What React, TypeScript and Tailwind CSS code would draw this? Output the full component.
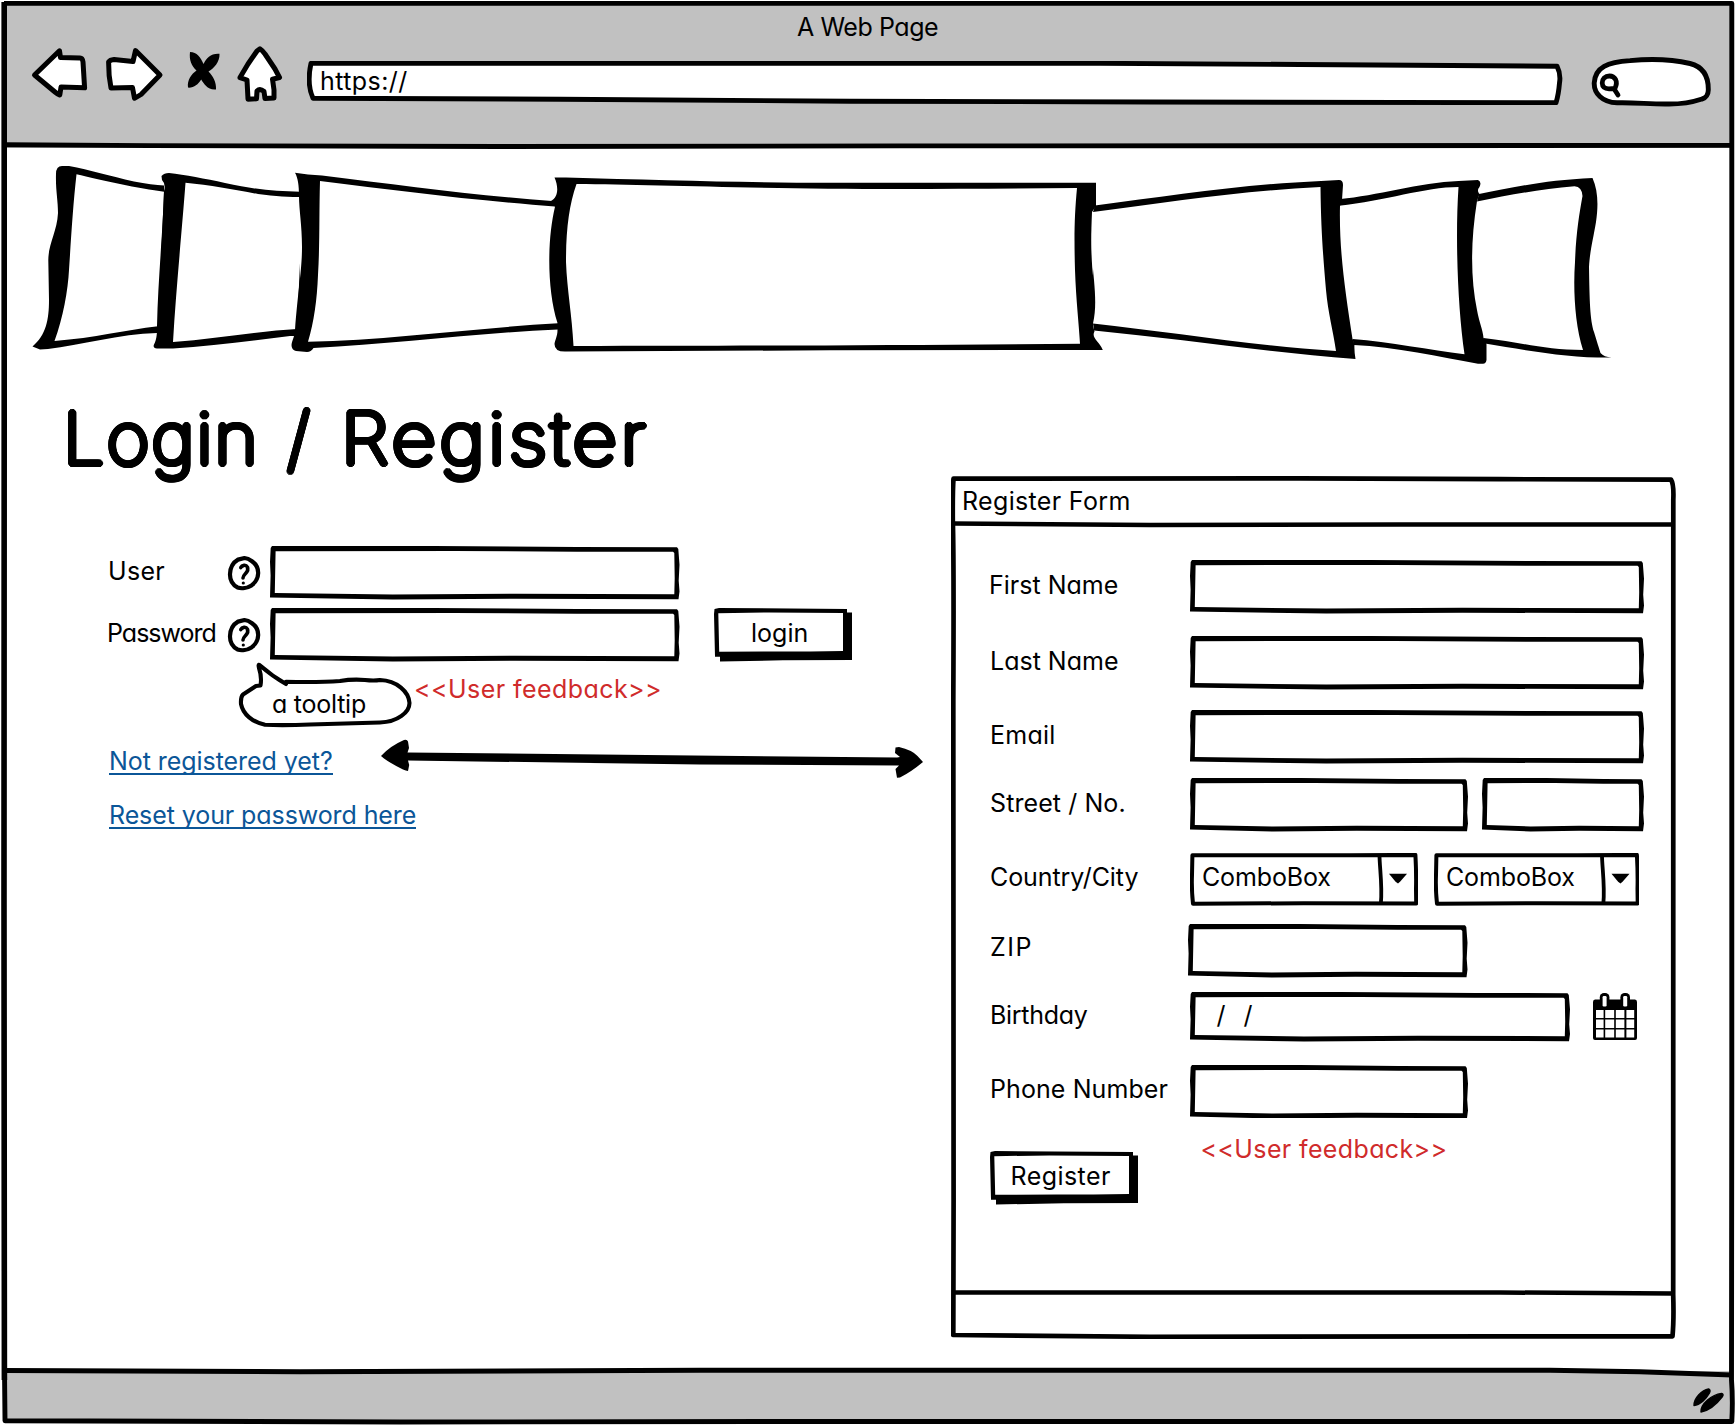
import { useLayoutEffect, useRef, type ReactNode } from "react";

/** Single line of text whose letter spacing is tuned so it spans `width` pixels. */
function Line({ children, width, className = "" }: { children: string; width: number; className?: string }) {
  const ref = useRef<HTMLSpanElement>(null);
  useLayoutEffect(() => {
    const el = ref.current;
    if (!el || children.length < 2) return;
    el.style.letterSpacing = "0px";
    const natural = el.offsetWidth;
    el.style.letterSpacing = `${(width - natural) / (children.length - 1)}px`;
  }, [children, width]);
  return (
    <span className="block shrink-0" style={{ width }}>
      <span ref={ref} className={`inline-block whitespace-pre ${className}`}>
        {children}
      </span>
    </span>
  );
}

/** Hand-drawn rectangle outline sized to its box. */
function Outline({ w, h }: { w: number; h: number }) {
  const outer = `M2 0 L${w * 0.4} 0 L${w * 0.75} 1 L${w - 2.5} 1.2 L${w - 1.2} 3 L${w} ${h * 0.35} L${w - 0.8} ${h * 0.65} L${w} ${h * 0.85} L${w - 1} ${h - 0.3} L${w * 0.6} ${h - 0.8} L${w * 0.3} ${h} L0 ${h - 2} L0.6 ${h * 0.55} L0 ${h * 0.3} L0.7 2 Z`;
  const inner = `M5.6 5.2 L4.8 ${h - 6.4} L${w * 0.3} ${h - 5} L${w * 0.6} ${h - 5.7} L${w - 5.2} ${h - 5.3} L${w - 4.8} ${h * 0.6} L${w - 5.2} 7 L${w - 6.5} 5.8 L${w * 0.75} 5.8 L${w * 0.45} 4.9 Z`;
  return (
    <svg className="absolute inset-0" width={w} height={h} viewBox={`0 0 ${w} ${h}`}>
      <path d={`${outer} ${inner}`} fillRule="evenodd" />
    </svg>
  );
}

function Box({ w, h = 53.5, children }: { w: number; h?: number; children?: ReactNode }) {
  return (
    <div className="relative shrink-0" style={{ width: w, height: h }}>
      <Outline w={w} h={h} />
      {children}
    </div>
  );
}

function SketchButton({ w, label, textWidth, pad }: { w: number; label: string; textWidth: number; pad: number }) {
  return (
    <button className="relative block h-[54px] shrink-0 text-left" style={{ width: w, paddingLeft: pad }}>
      <svg className="absolute inset-0" width={w} height={54} viewBox={`0 0 ${w} 54`}>
        <path
          fillRule="evenodd"
          d={`M0.5 1 L5 0 L${w - 5} 1 V4.5 H${w} V52 L${w * 0.5} 52.3 L6 53.5 V48.7 H1 L0 6 Z M4.3 5.2 L5.2 43.8 L${w * 0.45} 43.4 L${w * 0.7} 43.6 L${w - 9} 43 V5 L${w * 0.4} 4.4 Z`}
        />
      </svg>
      <span className="relative -mt-[4px] block">
        <Line width={textWidth}>{label}</Line>
      </span>
    </button>
  );
}

function Help() {
  return (
    <svg className="mt-[9px] block" width="36" height="37" viewBox="226 555 36 37" fill="none" stroke="#000" strokeLinecap="round" strokeLinejoin="round">
      <path strokeWidth="4.2" d="M238 559.6 L244.5 558 Q248 558.3 252 561.2 C256 564 258.2 568 258.2 573 C258 578 255.5 582.5 251.5 585.4 C247.5 588 241.5 588.8 237.5 587.4 C232.5 584.6 229.8 580 230 574 C230.2 567.5 233 562.5 238 559.6 Z" />
      <path strokeWidth="3.6" d="M240.8 567.6 C242 565 246 564.4 247.4 567 C248.6 569.8 247 572 245.6 573.4 C244 575.2 243 576.4 243 578" />
      <circle cx="243.3" cy="583" r="1.6" fill="#000" stroke="none" />
    </svg>
  );
}

function Combo({ w, split }: { w: number; split: number }) {
  return (
    <div className="relative h-[53px] shrink-0 pl-[12.5px] pt-[9px]" style={{ width: w }}>
      <svg className="absolute inset-0" width={w} height={53} viewBox={`0 0 ${w} 53`} fill="none" stroke="#000" strokeWidth="4" strokeLinejoin="round">
        <path d={`M2.4 2.2 L${w * 0.7} 2.2 L${w - 2.6} 1.9 Q${w - 1.6} 20 ${w - 2} 36 L${w - 1.8} 50.4 L${w * 0.5} 50.2 L3 50.8 Q1.4 36 2 22 Z`} />
        <path strokeWidth="3.8" d={`M${split} 2 C${split} 14 ${split + 3} 32 ${split + 1.4} 50`} />
        <path fill="#000" stroke="none" d={`M${split + 9.5} 20.8 h18 l-7 8 l-2 1.8 l-2.4 -1.8 Z`} />
      </svg>
      <Line width={129}>ComboBox</Line>
    </div>
  );
}

function Calendar() {
  return (
    <svg className="mt-px block shrink-0" width="44" height="48" viewBox="0 0 44 48">
      <path
        fillRule="evenodd"
        d="M2 6.6 H42 Q44 7 44 9 V45 Q44 47 42 47 H2 Q0 47 0 45 V9 Q0 7 2 6.6 Z M3 17 V25 H10.6 V17 Z M12.2 17 V25 H21.2 V17 Z M22.8 17 V25 H31.4 V17 Z M33.4 17 V25 H41.2 V17 Z M3 26.6 V35 H10.6 V26.6 Z M12.2 26.6 V35 H21.2 V26.6 Z M22.8 26.6 V35 H31.4 V26.6 Z M33.4 26.6 V35 H41.2 V26.6 Z M3 36.6 V44.6 H10.6 V36.6 Z M12.2 36.6 V44.6 H21.2 V36.6 Z M22.8 36.6 V44.6 H31.4 V36.6 Z M33.4 36.6 V44.6 H41.2 V36.6 Z"
      />
      <rect x="6.8" y="0" width="9.6" height="14" rx="4.2" />
      <rect x="27.4" y="0" width="9.6" height="14" rx="4.2" />
      <rect x="9.6" y="3" width="4" height="10.4" rx="1.2" fill="#fff" />
      <rect x="30.2" y="3" width="4" height="10.4" rx="1.2" fill="#fff" />
    </svg>
  );
}

function Carousel() {
  return (
    <svg className="block h-[232px] w-full" viewBox="0 148 1736 232">
      <path d="M56 174 Q56 166 62 166 L69 166 C90 170 110 176 134 181.5 C146 184 156 185 164 185.5 V333 H157 C120 334 80 345 48 349 L40 349.5 L32.5 346.5 C46 335 49 320 49 300 L48.3 260 C48.5 243 57 232 58 213 C58 200 55.5 190 56 174 Z" />
      <path fill="#fff" d="M76.5 174.3 C100 180 140 189 164 191.7 L158 326.3 C125 330 95 338 54.5 341 C63 318 68 290 69 270 C71 240 73 205 76.5 174.3 Z" />
      <path d="M161.5 176 Q164 173 169 173 C185 175 205 178.5 225 183 C255 189.5 275 191.5 300 191.7 V336 L290 336 C250 341 210 346 173 348.6 L157 348.6 C154 348 153 346.5 154 344.5 C157 339 157 333 157 326 C158 280 163 230 164 191 Q166 184 162 180 Z" />
      <path fill="#fff" d="M185.5 182.8 C210 185 235 190 258 194 C275 196.5 290 197 303 197.2 L297 329 C260 331 215 339 173 342 C176 290 182 230 185.5 182.8 Z" />
      <path d="M295 172.8 L308 174.5 L322 175.5 C400 185 470 195 552 201 L558 206 V329.6 C475 333 395 344 313.5 348 Q311 352 307 352 L296 351 Q291.5 350 291.5 345 C292 340 295 336 295 330 C298 290 302 270 302 247 C302 225 299 210 299 196 C299 186 298 178 295 172.8 Z" />
      <path fill="#fff" d="M320 181 C400 191 470 200 558 206.8 V323.3 C475 328 390 340 308 341.8 C314 322 317 300 318 275 C320 240 319 215 320 181 Z" />
      <path d="M554.5 177.5 L566 177.5 C660 180 750 182.8 830 182.8 H1096 V206 L1092 212 C1090.5 245 1091.5 262 1093.5 280 C1096 300 1095 312 1093 326 L1094.5 331.5 C1091 338 1099 341 1102.8 350 L830 350.3 L566 351.6 Q554.5 352 554.5 344 C555 340 557.5 336 557.5 330 L557.5 323 C547 290 547 240 555 206.8 L551 201 C558 197 559 188 554.5 177.5 Z" />
      <path fill="#fff" d="M576.5 184 C650 184.5 760 189 900 189 C960 189 1020 188.5 1077 188 C1074.5 215 1074 235 1075 270 C1076 300 1079 325 1080 343.7 C900 345 750 346 573.5 346 C572 315 567 290 566 262 C566 230 569 205 576.5 184 Z" />
      <path d="M1095 205.5 C1170 196 1240 184.5 1321 181 L1339 180 Q1343 180 1343 185 L1342 200 L1340 206 C1339 250 1345 290 1352.5 339 L1354.5 344 Q1354 350 1355.5 359 C1265 352 1180 339 1094 330.6 L1093 323.3 V212 Z" />
      <path fill="#fff" d="M1093 212 C1170 202 1240 191 1320.5 187 C1321 230 1323 255 1326 290 C1328 313 1333 330 1336 351 C1255 346 1170 332 1093 323.6 C1096 310 1095.5 298 1094 280 C1091 250 1091.5 235 1093 212 Z" />
      <path d="M1340.5 199 C1375 196 1420 182.5 1458.5 181 L1478 180 Q1482 182 1479.5 187 C1477 190 1478 192 1479.5 194 L1477 201 C1470 245 1471 280 1477 310 C1479 322 1483 330 1483.5 338 Q1486.5 340 1486.5 345 V360 Q1486 363.7 1483 363.7 L1478 363.7 C1440 357 1395 347 1354 345 L1352.5 339 C1390 342 1430 350 1464.5 354.3 C1458 310 1455 240 1458.5 187 C1425 187 1385 201 1339 205.7 Z" />
      <path d="M1479 194 C1510 188 1545 180 1592.5 178 C1598 190 1598.5 205 1596 222 C1593 240 1590 250 1589 267 C1589.5 300 1590 320 1594 332 C1597 342 1599 348 1600.5 353 Q1604 357 1611.5 357.6 C1570 358 1530 351 1485 343.5 L1483.5 338 C1520 342 1545 350 1583 350 C1575 325 1573 290 1575 262 C1576 235 1579 215 1582.5 196 Q1582 187 1574.5 186.3 C1540 189 1510 195 1477 201.5 Z" />
    </svg>
  );
}

function BrowserBar() {
  return (
    <header className="mx-[4px] mt-[3px] h-[145px] shrink-0 bg-[#c1c1c1]">
      <div className="flex h-[41px] items-start justify-center pt-[9px]">
        <Line width={142}>A Web Page</Line>
      </div>
      <div className="flex items-start">
        <svg className="ml-[24px] block shrink-0" width="262" height="64" viewBox="28 44 262 64" fill="#fff" stroke="#000" strokeWidth="5" strokeLinejoin="round">
          <path d="M34.5 75 L59.5 50.8 L60.5 57.6 L80 58 Q82.5 58 83 62 L84.6 87.8 L61 87 L59.8 95 Q58 94.5 55 92 Z" />
          <path d="M108.6 62 Q110 60 114 59.6 L133 61.6 L135.5 50.6 L160 75 L141 94.5 Q137 97 134.5 98.2 L132.5 87.6 L111 88 Q108.5 76 108.6 62 Z" />
          <path stroke="none" fill="#000" d="M190 52 C197 52 200.5 57 203.5 64 C206.5 58 211 53 219.5 53.7 C220 62 213.5 68.5 208.5 71.5 C213 76 216.5 82 216 89.5 C208 90.5 204 84 201.2 79.5 C198 84.5 194 88 188 87.6 C187 80 191.5 74 196.5 70.5 C191.5 66 189 60 190 52 Z" />
          <path d="M260 48.8 Q262 50 265 54 L275 69 L279.5 77.5 L272.5 79.2 L274 90 V98 L265 98.6 L264 91.5 Q260 88 257 91 L256.5 98.8 L248 99.2 L247 80 L240 77.6 L248 64 L257 51 Z" />
        </svg>
        <div className="relative ml-[17px] mt-[17px] h-[44px] w-[1256px] pl-[13px] pt-[5px]">
          <svg className="absolute inset-0" width="1256" height="44" viewBox="307 61 1256 44">
            <path fill="#fff" stroke="#000" strokeWidth="4.9" strokeLinejoin="round" d="M311 63.3 H1100 L1300 64.5 L1557 66.2 Q1561 74 1559.5 83 Q1558.5 95 1556 102.7 L1150 102 L850 101.2 L560 99.2 L313 98.3 Q306.5 84 311 63.3 Z" />
          </svg>
          <div className="relative">
            <Line width={87}>https://</Line>
          </div>
        </div>
        <svg className="ml-[28px] mt-[12px] block shrink-0" width="122" height="54" viewBox="1591 56 122 54" fill="none" stroke="#000" strokeLinecap="round">
          <path fill="#fff" strokeWidth="4.9" d="M1617 102.8 C1602 102.5 1594 93 1594.2 83 C1595 67 1608 62 1630 60.6 C1650 58.8 1672 59.3 1690 63.5 C1704 67 1708.5 78 1708.3 90 C1708.3 94 1706 98 1702 99 C1690 103 1680 104.5 1665 104 C1648 104 1634 102.3 1617 102.8 Z" />
          <path strokeWidth="4.8" d="M1609.5 76 C1605 76 1602.2 79 1602.2 83 C1602.4 87 1605 88.8 1609 88.8 L1615 88.4 Q1617.4 83 1615.6 79.5 Q1613.6 76 1609.5 76 Z M1614.5 89.5 L1618 95" />
        </svg>
      </div>
    </header>
  );
}

function WindowFrame() {
  return (
    <svg className="pointer-events-none absolute inset-0" width="1736" height="1426" viewBox="0 0 1736 1426" fill="none" stroke="#000" strokeWidth="4.9">
      <path d="M4 3.4 H1731.8 V1080 L1731.5 1380 Q1733 1400 1731.8 1421.5 H800 L400 1422 L5 1420.8 L4.5 1371" strokeLinejoin="round" />
      <path strokeWidth="5.6" d="M4.2 2 V160 L4.2 420 L4 900 L4.4 1380" />
      <path d="M5 144.8 L150 145.6 L500 146.5 L900 145.9 L1732 145.4" />
      <path d="M5 1370.5 L300 1371.7 L700 1370.3 L1550 1370.3 L1640 1371.8 L1732 1375" />
      <path fill="#000" strokeWidth="1.4" strokeLinejoin="round" d="M1694 1405.5 C1694 1398 1702 1390 1708.5 1389 Q1711 1390 1709.5 1393 C1706.5 1398.5 1700 1405 1694 1405.5 Z M1701 1412 C1700.5 1404 1712 1394.5 1721.5 1393.4 Q1724 1394 1722.5 1396.5 C1717.5 1403 1709.5 1410.500 1701 1412 Z" />
    </svg>
  );
}

/** Thin glyphs thickened by two rings of offsets, which gives round stroke ends. */
const markerStroke =
  "font-thin [text-shadow:3.1px_0_#000,2.86px_1.19px_#000,2.19px_2.19px_#000,1.19px_2.86px_#000,0_3.1px_#000,-1.19px_2.86px_#000,-2.19px_2.19px_#000,-2.86px_1.19px_#000,-3.1px_0_#000,-2.86px_-1.19px_#000,-2.19px_-2.19px_#000,-1.19px_-2.86px_#000,0_-3.1px_#000,1.19px_-2.86px_#000,2.19px_-2.19px_#000,2.86px_-1.19px_#000,1.6px_0_#000,1.1px_1.1px_#000,0_1.6px_#000,-1.1px_1.1px_#000,-1.6px_0_#000,-1.1px_-1.1px_#000,0_-1.6px_#000,1.1px_-1.1px_#000]";

function LoginPanel() {
  return (
    <section className="w-[951px] shrink-0 pt-[13px]">
      <h1 className={`flex h-[90px] pl-[63px] text-[71px] leading-[90px] ${markerStroke}`}>
        <span className="block w-[194px] shrink-0 origin-left scale-x-[1.04]">
          <Line width={187}>Login</Line>
        </span>
        <span className="w-[30px] shrink-0" />
        <Line width={25}>/</Line>
        <span className="w-[29px] shrink-0" />
        <span className="block w-[305px] shrink-0 origin-left scale-x-[1.09]">
          <Line width={280}>Register</Line>
        </span>
      </h1>
      <div className="mt-[63px] grid grid-cols-[119px_44px_410px_auto] gap-y-[8.5px] pl-[107px]">
        <div className="pl-px pt-[10px]">
          <Line width={57}>User</Line>
        </div>
        <Help />
        <Box w={409.5} />
        <span />
        <div className="pt-[10px]">
          <Line width={110}>Password</Line>
        </div>
        <Help />
        <Box w={409.5} />
        <div className="pl-[34px]">
          <SketchButton w={138} label="login" textWidth={57} pad={37} />
        </div>
      </div>
      <div className="flex h-[67px] items-start pl-[236px]">
        <div className="relative h-[68px] w-[178px] shrink-0 pl-[36px] pt-[27px]">
          <svg className="absolute inset-0" width="178" height="68" viewBox="236 662 178 68" fill="none" stroke="#000" strokeWidth="4.1" strokeLinecap="round" strokeLinejoin="round">
            <path d="M286 684 Q272 676 259.5 665 Q258 664 259 668 Q262 677 260.5 685.5 L256 686 L243 694.5 Q240.5 697 241 704 C243 714 252 722 265 724.8 Q285 725.5 310 724.5 L380 722.5 C398 722 409.5 712 409.5 703 C409 692 397 680.5 380 680 Q374 681 365 680 Q352 679 340 681 Q320 682.5 286 681.8" />
          </svg>
          <Line width={94}>a tooltip</Line>
        </div>
        <div className="pt-[12px] text-[#d02b2b]">
          <Line width={248}>{"<<User feedback>>"}</Line>
        </div>
      </div>
      <div className="flex h-[54px] items-start pl-[109px]">
        <div className="w-[269px] shrink-0 pt-[17px] text-[#0b5698]">
          <a className="block h-[29px] w-[224px] border-b-2 border-[#0b5698]">
            <Line width={224}>Not registered yet?</Line>
          </a>
        </div>
        <svg className="block shrink-0" width="550" height="50" viewBox="378 729 550 50">
          <path d="M381 756 Q390 746 404 740 Q407 739 408 741.5 L409 748 L407.5 752.5 L600 754.5 L897 757.5 L900 757 L895 753 L895.5 747.5 L899 747 Q912 750 917.5 756 L923 762 Q911 772 900 777.5 L897 777.8 L895.5 769 L899 765.6 L700 764.5 L408 760.5 L409.2 765 L408 771 Q406 770.6 403 769.5 Q390 763 384 758.5 Z" />
        </svg>
      </div>
      <div className="pl-[109px] pt-[17px] text-[#0b5698]">
        <a className="block h-[29px] w-[307px] border-b-2 border-[#0b5698]">
          <Line width={307}>Reset your password here</Line>
        </a>
      </div>
    </section>
  );
}

function Field({ label, width, children, className = "" }: { label: string; width: number; children: ReactNode; className?: string }) {
  return (
    <div className={`flex items-start pl-[38px] ${className}`}>
      <div className="w-[200.5px] shrink-0">
        <Line width={width}>{label}</Line>
      </div>
      {children}
    </div>
  );
}

function RegisterWindow() {
  return (
    <section className="relative mt-[96px] h-[863px] w-[725px] shrink-0">
      <svg className="absolute inset-0" width="725" height="863" viewBox="951 476 725 863" fill="none" stroke="#000" strokeWidth="4.7">
        <path d="M953.5 478.7 L1300 478.4 L1500 479.2 L1671 479.6 Q1674 484 1673.3 500 L1673.2 1295 Q1674 1320 1672.5 1336.3 L1500 1336.3 L1150 1336.8 L953.3 1335 L953.6 1200 L953.3 700 Q954 560 952.8 520 Q952.6 490 953.5 478.7 Z" strokeLinejoin="round" />
        <path d="M953 523.6 L1150 525 L1400 524.6 L1673 524.6" strokeWidth="4.5" />
        <path d="M953 1292.5 H1500 L1673 1293.4" strokeWidth="4.5" />
      </svg>
      <div className="h-[84px] pl-[11px] pt-[10px]">
        <Line width={168}>Register Form</Line>
      </div>
      <div className="flex flex-col">
        <Field label="First Name" width={129} className="h-[53px] [&>div:first-child]:pt-[10px]">
          <Box w={454} />
        </Field>
        <Field label="Last Name" width={128} className="mt-[23px] h-[53px] [&>div:first-child]:pl-px [&>div:first-child]:pt-[10px]">
          <Box w={454} />
        </Field>
        <Field label="Email" width={65} className="mt-[21px] h-[53px] [&>div:first-child]:pl-px [&>div:first-child]:pt-[10px]">
          <Box w={454} />
        </Field>
        <Field label="Street / No." width={136} className="mt-[15px] h-[53px] [&>div:first-child]:pl-px [&>div:first-child]:pt-[10px]">
          <Box w={278} />
          <div className="ml-[14px]">
            <Box w={162} />
          </div>
        </Field>
        <Field label="Country/City" width={148} className="mt-[22px] h-[53px] [&>div:first-child]:pl-px [&>div:first-child]:pt-[9px]">
          <Combo w={228} split={189.5} />
          <div className="ml-[16px]">
            <Combo w={205.5} split={168} />
          </div>
        </Field>
        <Field label="ZIP" width={41} className="mt-[18px] h-[53px] [&>div:first-child]:pl-px [&>div:first-child]:pt-[8px]">
          <div className="-ml-[1.5px]">
            <Box w={279.5} />
          </div>
        </Field>
        <Field label="Birthday" width={98} className="mt-[15px] h-[49px] [&>div:first-child]:pl-px [&>div:first-child]:pt-[8px]">
          <Box w={380} h={49.5}>
            <div className="pl-[27px] pt-[8px]">
              <Line width={36}>{"/  /"}</Line>
            </div>
          </Box>
          <div className="ml-[23.5px]">
            <Calendar />
          </div>
        </Field>
        <Field label="Phone Number" width={178} className="mt-[23.5px] h-[53px] [&>div:first-child]:pl-px [&>div:first-child]:pt-[9.5px]">
          <Box w={278} />
        </Field>
      </div>
      <div className="mt-[16px] flex items-start pl-[38.5px]">
        <div className="mt-[17px]">
          <SketchButton w={148} label="Register" textWidth={100} pad={21} />
        </div>
        <div className="ml-[63px] text-[#d02b2b]">
          <Line width={247}>{"<<User feedback>>"}</Line>
        </div>
      </div>
    </section>
  );
}

export default function App() {
  return (
    <div className="relative flex h-[1426px] w-[1736px] flex-col overflow-hidden bg-white font-['Inter','Noto_Sans',sans-serif] text-[25px] leading-[30px] text-black [font-feature-settings:'cv11']">
      <BrowserBar />
      <main className="min-h-0 flex-1">
        <Carousel />
        <div className="flex items-start">
          <LoginPanel />
          <RegisterWindow />
        </div>
      </main>
      <footer className="mx-[4px] mb-[4px] h-[51px] shrink-0 bg-[#c1c1c1]" />
      <WindowFrame />
    </div>
  );
}
